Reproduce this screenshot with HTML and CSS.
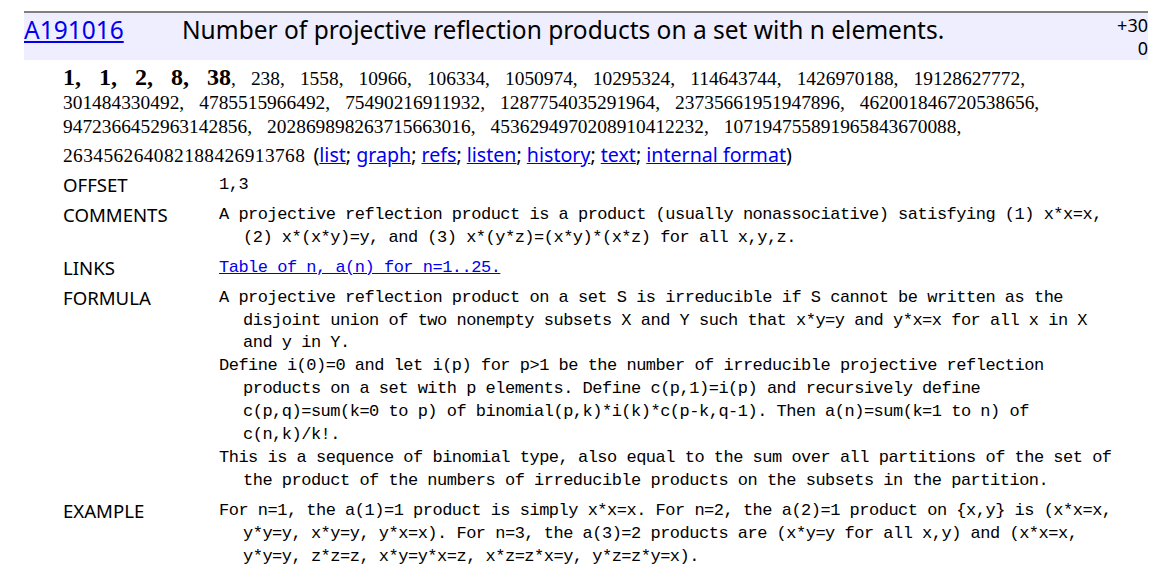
FILE: index.html
```html
<!DOCTYPE html>
<html lang="en">
<head>
<meta charset="utf-8">
<title>A191016 - OEIS</title>
<link rel="stylesheet" href="styles.css">
</head>
<body>
<div class="page">
  <div class="hdr">
    <div class="hdr-id"><a href="#">A191016</a></div>
    <div class="hdr-title">Number of projective reflection products on a set with n elements.</div>
    <div class="hdr-votes">+30<br>0</div>
  </div>

  <div class="seq">
    <b>1, 1, 2, 8, 38</b>, 238, 1558, 10966, 106334, 1050974, 10295324, 114643744, 1426970188, 19128627772,<br>
    301484330492, 4785515966492, 75490216911932, 1287754035291964, 23735661951947896, 462001846720538656,<br>
    9472366452963142856, 202869898263715663016, 4536294970208910412232, 107194755891965843670088,<br>
    <span class="last">263456264082188426913768</span><span class="seqlinks"> (<a href="#">list</a>; <a href="#">graph</a>; <a href="#">refs</a>; <a href="#">listen</a>; <a href="#">history</a>; <a href="#">text</a>; <a href="#">internal format</a>)</span>
  </div>

  <div class="fields">
    <div class="field">
      <div class="label">OFFSET</div>
      <div class="value"><div class="para">1,3</div></div>
    </div>
    <div class="field">
      <div class="label">COMMENTS</div>
      <div class="value">
        <div class="para">A projective reflection product is a product (usually nonassociative) satisfying (1) x*x=x,<br>(2) x*(x*y)=y, and (3) x*(y*z)=(x*y)*(x*z) for all x,y,z.</div>
      </div>
    </div>
    <div class="field">
      <div class="label">LINKS</div>
      <div class="value"><div class="para"><a href="#">Table of n, a(n) for n=1..25.</a></div></div>
    </div>
    <div class="field">
      <div class="label">FORMULA</div>
      <div class="value">
        <div class="para">A projective reflection product on a set S is irreducible if S cannot be written as the<br>disjoint union of two nonempty subsets X and Y such that x*y=y and y*x=x for all x in X<br>and y in Y.</div>
        <div class="para">Define i(0)=0 and let i(p) for p&gt;1 be the number of irreducible projective reflection<br>products on a set with p elements. Define c(p,1)=i(p) and recursively define<br>c(p,q)=sum(k=0 to p) of binomial(p,k)*i(k)*c(p-k,q-1). Then a(n)=sum(k=1 to n) of<br>c(n,k)/k!.</div>
        <div class="para">This is a sequence of binomial type, also equal to the sum over all partitions of the set of<br>the product of the numbers of irreducible products on the subsets in the partition.</div>
      </div>
    </div>
    <div class="field">
      <div class="label">EXAMPLE</div>
      <div class="value">
        <div class="para">For n=1, the a(1)=1 product is simply x*x=x. For n=2, the a(2)=1 product on {x,y} is (x*x=x,<br>y*y=y, x*y=y, y*x=x). For n=3, the a(3)=2 products are (x*y=y for all x,y) and (x*x=x,<br>y*y=y, z*z=z, x*y=y*x=z, x*z=z*x=y, y*z=z*y=x).</div>
      </div>
    </div>
  </div>
</div>
</body>
</html>
```

FILE: styles.css
```css
html, body {
  margin: 0;
  padding: 0;
  background: #ffffff;
  color: #000000;
}

body {
  font-family: "Noto Sans", "Open Sans", sans-serif;
}

a {
  color: #0000ee;
  text-decoration: underline;
}

.page {
  width: 1124px;
  padding: 11px 0 0 24px;
}

/* header bar */
.hdr {
  display: flex;
  align-items: flex-start;
  border-top: 2px solid #808080;
  background: #eeeeff;
  height: 47px;
}

.hdr-id {
  width: 158px;
  flex: none;
  font-size: 24.5px;
  line-height: 33px;
}

.hdr-title {
  flex: 1;
  font-size: 24.5px;
  line-height: 33px;
  white-space: nowrap;
}

.hdr-votes {
  flex: none;
  text-align: right;
  font-size: 18px;
  line-height: 23px;
  padding-top: 1px;
}

/* sequence terms */
.seq {
  margin: 5px 0 0 39px;
  font-family: "Liberation Serif", serif;
  font-size: 19.4px;
  line-height: 24px;
  word-spacing: 10.2px;
  white-space: nowrap;
}

.seq b {
  font-size: 24px;
  word-spacing: 12px;
  line-height: 1;
}

.seq .last {
  letter-spacing: 0.4px;
}

.seqlinks {
  font-family: "Noto Sans", "Open Sans", sans-serif;
  font-size: 19.6px;
  line-height: 32px;
  word-spacing: 0;
  letter-spacing: 0;
  margin-left: 3px;
}

/* fields */
.fields {
  margin: 3px 0 0 39px;
  display: flex;
  flex-direction: column;
  gap: 7px;
}

.field {
  display: grid;
  grid-template-columns: 156px 1fr;
  line-height: 22.9px;
}

.label {
  font-size: 18.6px;
}

.value {
  font-family: "Liberation Mono", monospace;
  font-size: 17px;
  letter-spacing: -0.5px;
  white-space: nowrap;
}

.para {
  padding-left: 24px;
  text-indent: -24px;
}
```
